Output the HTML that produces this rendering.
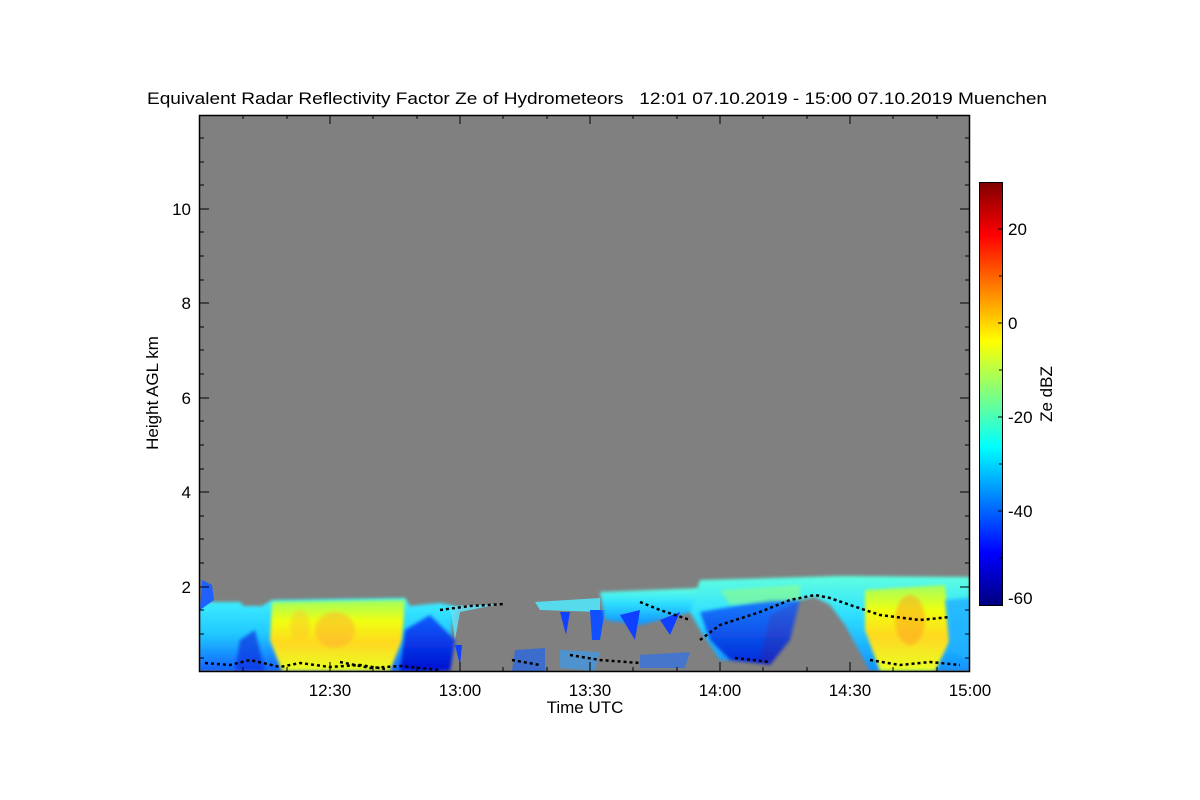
<!DOCTYPE html>
<html><head><meta charset="utf-8"><style>
html,body{margin:0;padding:0;background:#fff;}
svg{display:block;font-family:"Liberation Sans",sans-serif;}
</style></head><body>
<svg width="1200" height="800" viewBox="0 0 1200 800" xmlns="http://www.w3.org/2000/svg">
<defs>
<linearGradient id="jet" x1="0" y1="1" x2="0" y2="0">
<stop offset="0" stop-color="#00007f"/><stop offset="0.125" stop-color="#0000ff"/>
<stop offset="0.375" stop-color="#00ffff"/><stop offset="0.625" stop-color="#ffff00"/>
<stop offset="0.875" stop-color="#ff0000"/><stop offset="1" stop-color="#7f0000"/>
</linearGradient>
<linearGradient id="cy" x1="0" y1="0" x2="0" y2="1">
<stop offset="0" stop-color="#40f0ff"/><stop offset="0.5" stop-color="#20c8ff"/><stop offset="1" stop-color="#1060ff"/>
</linearGradient>
<linearGradient id="cy2" x1="0" y1="0" x2="0" y2="1">
<stop offset="0" stop-color="#60ffe0"/><stop offset="0.4" stop-color="#30e0ff"/><stop offset="1" stop-color="#1090ff"/>
</linearGradient>
<linearGradient id="yl" x1="0" y1="0" x2="0" y2="1">
<stop offset="0" stop-color="#a0ff60"/><stop offset="0.3" stop-color="#f0ff10"/><stop offset="0.6" stop-color="#ffd820"/><stop offset="1" stop-color="#e8ff20"/>
</linearGradient>
<linearGradient id="bl" x1="0" y1="0" x2="0" y2="1">
<stop offset="0" stop-color="#1060ff"/><stop offset="1" stop-color="#0010d0"/>
</linearGradient>
<filter id="bf"><feGaussianBlur stdDeviation="1.5"/></filter>
</defs>
<text x="147" y="104" font-size="16.5" textLength="900" lengthAdjust="spacingAndGlyphs" xml:space="preserve" style="white-space:pre">Equivalent Radar Reflectivity Factor Ze of Hydrometeors   12:01 07.10.2019 - 15:00 07.10.2019 Muenchen</text>
<rect x="199" y="115" width="771" height="556" fill="#808080"/>
<svg x="199" y="115" width="771" height="556" viewBox="199 115 771 556" overflow="hidden">
<path d="M199 602 L240 602 L244 606 L262 606 L272 600 L405 598 L410 606 L440 603 L455 606 L450 640 L440 671 L199 671Z" fill="url(#cy)" filter="url(#bf)"/>
<path d="M272 602 L405 600 L402 640 L390 671 L282 671 L270 640Z" fill="url(#yl)" filter="url(#bf)"/>
<ellipse cx="335" cy="630" rx="20" ry="18" fill="#ffb030" opacity="0.5" filter="url(#bf)"/>
<ellipse cx="300" cy="625" rx="10" ry="15" fill="#ffc030" opacity="0.4" filter="url(#bf)"/>
<path d="M200 610 L202 580 L212 585 L214 600Z" fill="#2060ff"/>
<path d="M240 640 L255 630 L265 671 L235 671Z" fill="#1030e0" opacity="0.7" filter="url(#bf)"/>
<path d="M405 630 L430 615 L455 640 L450 671 L400 671Z" fill="url(#bl)" filter="url(#bf)"/>
<path d="M450 606 L500 604 L460 612 L455 640Z" fill="#60e8ff" opacity="0.8"/>
<path d="M455 645 L462 645 L460 665Z" fill="#1040ff"/>
<path d="M535 602 L600 598 L600 612 L540 610Z" fill="#50eaff" opacity="0.85"/>
<path d="M560 612 L570 612 L566 635Z" fill="#1040ff"/>
<path d="M590 610 L605 610 L600 640 L592 640Z" fill="#1050ff"/>
<path d="M515 650 L545 648 L545 671 L512 671Z" fill="#1060ff" opacity="0.6"/>
<path d="M560 650 L600 652 L595 671 L560 668Z" fill="#30a0ff" opacity="0.6"/>
<path d="M600 592 L700 588 L700 610 L640 625 L605 620Z" fill="url(#cy2)" filter="url(#bf)"/>
<path d="M620 615 L640 610 L635 640Z" fill="#1040ff"/>
<path d="M660 620 L680 612 L670 635Z" fill="#1040ff"/>
<path d="M640 655 L690 652 L685 668 L640 668Z" fill="#2070ff" opacity="0.6"/>
<path d="M700 580 L840 576 L970 577 L970 671 L870 671 L845 625 L830 605 L815 597 L800 600 L770 615 L760 660 L720 660 L700 630 L690 612Z" fill="url(#cy2)" filter="url(#bf)"/>
<path d="M700 612 L770 600 L800 600 L790 640 L770 665 L730 660 L710 640Z" fill="url(#bl)" opacity="0.8" filter="url(#bf)"/>
<path d="M720 590 L800 585 L800 600 L730 605Z" fill="#a0ff70" opacity="0.5" filter="url(#bf)"/>
<path d="M865 590 L945 585 L950 640 L935 671 L880 671 L865 630Z" fill="url(#yl)" filter="url(#bf)"/>
<ellipse cx="910" cy="620" rx="15" ry="25" fill="#ffa020" opacity="0.5" filter="url(#bf)"/>
<path d="M945 600 L970 598 L970 660 L950 650Z" fill="#20b0ff" opacity="0.8" filter="url(#bf)"/>
<g fill="none" stroke="#000" stroke-width="2.5" stroke-dasharray="3 3">
<path d="M205 663 L230 665 L250 660 L280 667 L300 663 L330 667 L360 665 L385 669"/>
<path d="M340 662 L370 668 L400 666 L420 668 L440 670"/>
<path d="M440 610 L470 606 L505 604"/>
<path d="M570 655 L600 660 L640 663"/>
<path d="M512 660 L540 665"/>
<path d="M700 640 L720 625 L760 612 L790 600 L815 595 L830 598 L850 605 L880 615 L920 620 L950 617"/>
<path d="M870 660 L900 665 L930 662 L960 665"/>
<path d="M735 658 L770 662"/>
<path d="M640 602 L660 610 L690 620"/>
</g>
</svg>
<rect x="199.5" y="115.5" width="770" height="556" fill="none" stroke="#000" stroke-width="1.5"/>
<g stroke="#000" stroke-width="1">
<path d="M200 587h9M200 492h9M200 398h9M200 303h9M200 209h9M969 587h-9M969 492h-9M969 398h-9M969 303h-9M969 209h-9"/>
<path d="M200 658h4M200 634h4M200 610h4M200 563h4M200 539h4M200 516h4M200 469h4M200 445h4M200 421h4M200 374h4M200 350h4M200 327h4M200 280h4M200 256h4M200 232h4M200 185h4M200 162h4M200 138h4
M969 658h-4M969 634h-4M969 610h-4M969 563h-4M969 539h-4M969 516h-4M969 469h-4M969 445h-4M969 421h-4M969 374h-4M969 350h-4M969 327h-4M969 280h-4M969 256h-4M969 232h-4M969 185h-4M969 162h-4M969 138h-4"/>
<path d="M330 671v-9M460 671v-9M590 671v-9M720 671v-9M850 671v-9M330 115v9M460 115v9M590 115v9M720 115v9M850 115v9"/>
<path d="M243 671v-4M287 671v-4M373 671v-4M417 671v-4M503 671v-4M547 671v-4M633 671v-4M677 671v-4M763 671v-4M807 671v-4M893 671v-4M937 671v-4
M243 115v4M287 115v4M373 115v4M417 115v4M503 115v4M547 115v4M633 115v4M677 115v4M763 115v4M807 115v4M893 115v4M937 115v4"/>
</g>
<g font-size="17" text-anchor="end">
<text x="191" y="593">2</text><text x="191" y="498">4</text><text x="191" y="404">6</text><text x="191" y="309">8</text><text x="191" y="215">10</text>
</g>
<g font-size="17" text-anchor="middle">
<text x="330" y="696">12:30</text><text x="460" y="696">13:00</text><text x="590" y="696">13:30</text><text x="720" y="696">14:00</text><text x="850" y="696">14:30</text><text x="970" y="696">15:00</text>
<text x="585" y="713">Time UTC</text>
</g>
<text transform="translate(158 393) rotate(-90)" font-size="17" text-anchor="middle">Height AGL km</text>
<rect x="979.5" y="182.5" width="23" height="423" fill="url(#jet)" stroke="#000" stroke-width="1"/>
<g stroke="#000"><path d="M1002 229h-4M1002 276h-3M1002 323h-4M1002 370h-3M1002 417h-4M1002 464h-3M1002 511h-4M1002 558h-3"/></g>
<g font-size="17">
<text x="1008" y="235">20</text><text x="1008" y="329">0</text><text x="1008" y="423">-20</text><text x="1008" y="517">-40</text><text x="1008" y="604">-60</text>
</g>
<text transform="translate(1052 394) rotate(-90)" font-size="17" text-anchor="middle">Ze dBZ</text>
</svg>
</body></html>
